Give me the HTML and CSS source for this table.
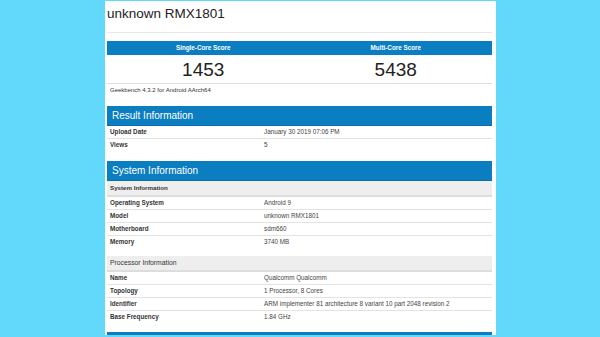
FILE: index.html
```html
<!DOCTYPE html>
<html lang="en">
<head>
    <meta charset="UTF-8">
    <title>unknown RMX1801 - Geekbench Browser</title>
    <link rel="stylesheet" href="styles.css">
</head>
<body>
    <div class="page">
        <h1 class="device-title">unknown RMX1801</h1>

        <!-- Skóre -->
        <div class="scores">
            <div class="score-col">
                <div class="score-head">Single-Core Score</div>
                <div class="score-value">1453</div>
            </div>
            <div class="score-col">
                <div class="score-head">Multi-Core Score</div>
                <div class="score-value">5438</div>
            </div>
        </div>
        <p class="version">Geekbench 4.3.2 for Android AArch64</p>

        <section class="info-block">
            <h2 class="block-head">Result Information</h2>
            <div class="row"><span class="label">Upload Date</span><span class="value">January 30 2019 07:06 PM</span></div>
            <div class="row last"><span class="label">Views</span><span class="value">5</span></div>
        </section>

        <section class="info-block">
            <h2 class="block-head">System Information</h2>
            <div class="sub-head bold">System Information</div>
            <div class="row"><span class="label">Operating System</span><span class="value">Android 9</span></div>
            <div class="row"><span class="label">Model</span><span class="value">unknown RMX1801</span></div>
            <div class="row"><span class="label">Motherboard</span><span class="value">sdm660</span></div>
            <div class="row last"><span class="label">Memory</span><span class="value">3740 MB</span></div>

            <div class="sub-head spaced">Processor Information</div>
            <div class="row"><span class="label">Name</span><span class="value">Qualcomm Qualcomm</span></div>
            <div class="row"><span class="label">Topology</span><span class="value">1 Processor, 8 Cores</span></div>
            <div class="row"><span class="label">Identifier</span><span class="value">ARM implementer 81 architecture 8 variant 10 part 2048 revision 2</span></div>
            <div class="row last"><span class="label">Base Frequency</span><span class="value">1.84 GHz</span></div>
        </section>

        <div class="block-head next"></div>
    </div>
</body>
</html>
```

FILE: styles.css
```css
* { margin: 0; padding: 0; box-sizing: border-box; }
body { background: #62d9fb; font-family: 'Liberation Sans', Arial, sans-serif; color: #333; height: 337px; overflow: hidden; display: flex; justify-content: center; }
.page { width: 391px; height: 334px; margin-top: 1px; margin-left: 1px; background: #fff; padding: 0 4px 0 2px; overflow: hidden; }

.device-title { font-size: 13.5px; font-weight: normal; color: #222; height: 32px; padding-top: 5px; border-bottom: 1px solid #e8e8e8; }

.scores { display: flex; margin-top: 8px; border-bottom: 1px solid #ddd; }
.score-col { flex: 1; text-align: center; }
.score-head { background: #0b7ec1; color: #fff; font-size: 6.3px; font-weight: bold; height: 14px; line-height: 14px; }
.score-value { font-size: 19px; height: 28px; line-height: 29px; color: #222; }

.version { font-size: 6px; color: #333; padding: 3px 0 0 3px; height: 22px; }

.info-block { margin-bottom: 9px; }
.block-head { background: #0b7ec1; color: #fff; font-size: 10px; font-weight: normal; height: 20px; line-height: 20px; padding-left: 5px; border-bottom: 1px solid #0a6fa8; }
.block-head.next { height: 6px; margin-top: -1px; }

.sub-head { background: #eee; border-bottom: 2px solid #ddd; font-size: 6.2px; color: #333; height: 16px; line-height: 14px; padding-left: 3px; }
.sub-head.bold { font-weight: bold; }
.sub-head.spaced { margin-top: 7px; font-size: 6.8px; }

.row { display: flex; height: 13px; line-height: 12px; border-bottom: 1px solid #e3e3e3; font-size: 6.3px; }
.row.last { border-bottom: none; }
.label { width: 157px; padding-left: 3px; font-weight: bold; color: #333; }
.value { color: #444; }
```
